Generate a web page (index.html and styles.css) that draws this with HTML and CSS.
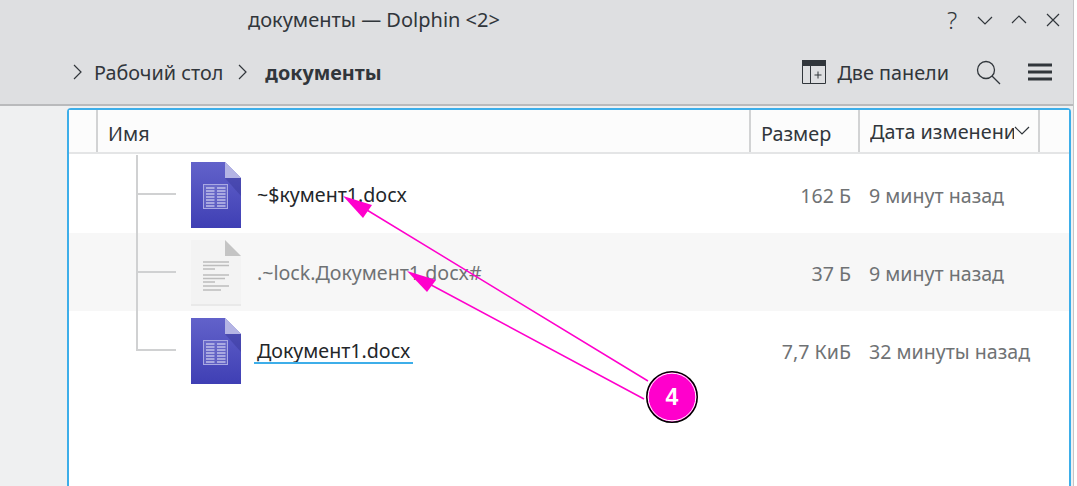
FILE: index.html
```html
<!DOCTYPE html>
<html lang="ru">
<head>
<meta charset="utf-8">
<title>документы — Dolphin &lt;2&gt;</title>
<link rel="stylesheet" href="styles.css">
</head>
<body>
<svg width="0" height="0" class="defs">
  <defs>
    <linearGradient id="blue" x1="0" y1="0" x2="0" y2="1">
      <stop offset="0" stop-color="#6262ca"/>
      <stop offset="1" stop-color="#3f3fb4"/>
    </linearGradient>
    <symbol id="docx" viewBox="0 0 50 66">
      <path d="M0 0H34L50 16V66H0Z" fill="url(#blue)"/>
      <path d="M34 16H50V34Z" fill="#2f2f8c" opacity=".35"/>
      <path d="M34 0L50 16H34Z" fill="#b4b4e4"/>
      <rect x="12.500" y="22.500" width="24" height="24" fill="#fff" fill-opacity=".12" stroke="#a9a9e2"/>
      <path d="M15 26h8.500M26 26h8.500M15 29h8.500M26 29h8.500M15 32h8.500M26 32h8.500M15 35h8.500M26 35h8.500M15 38h8.500M26 38h8.500M15 41h8.500M26 41h8.500M15 44h8.500M26 44h8.500" stroke="#eeeefb" stroke-width="1.100"/>
    </symbol>
  </defs>
</svg>
<div class="window">
  <header class="top">
    <div class="titlebar">
      <span class="title">документы — Dolphin &lt;2&gt;</span>
      <div class="winbtns">
        <span class="help">?</span>
        <svg class="wbtn" viewBox="0 0 16 16"><path d="M1 5l7 7 7-7" /></svg>
        <svg class="wbtn" viewBox="0 0 16 16"><path d="M1 11l7-7 7 7" /></svg>
        <svg class="wbtn" viewBox="0 0 16 16"><path d="M2 2l12 12M14 2L2 14" /></svg>
      </div>
    </div>
    <div class="toolbar">
      <svg class="crumb-sep" viewBox="0 0 10 16"><path d="M1 1l7 7-7 7"/></svg>
      <span class="crumb">Рабочий стол</span>
      <svg class="crumb-sep second" viewBox="0 0 10 16"><path d="M1 1l7 7-7 7"/></svg>
      <span class="crumb current">документы</span>
      <div class="tools">
        <svg class="split" viewBox="0 0 24 24"><path d="M0 0H24V6H0Z" fill="#31363b"/><path d="M.5 6V23.500H23.500V6M8.500 6V23.500M16 11.500V18.500M12.500 15H19.500" fill="none" stroke="#31363b"/></svg>
        <span class="tool-label">Две панели</span>
        <svg class="search" viewBox="0 0 25 25"><circle cx="10" cy="10" r="8.500"/><path d="M16 16l8 8"/></svg>
        <svg class="menu" viewBox="0 0 24 20"><path d="M0 3H24M0 10H24M0 17H24"/></svg>
      </div>
    </div>
  </header>
  <main class="content">
    <section class="panel">
      <div class="columns">
        <div class="col col-gutter"></div>
        <div class="col col-name">Имя</div>
        <div class="col col-size">Размер</div>
        <div class="col col-date"><span class="date-text">Дата изменени</span><svg class="sort" viewBox="0 0 16 10"><path d="M1 1l7 7 7-7"/></svg></div>
      </div>
      <div class="rows">
        <div class="row">
          <div class="tree first"></div>
          <svg class="icon"><use href="#docx"/></svg>
          <span class="name">~$кумент1.docx</span>
          <span class="size">162 Б</span>
          <span class="date">9 минут назад</span>
        </div>
        <div class="row hidden-file">
          <div class="tree"></div>
          <svg class="icon" viewBox="0 0 50 66">
            <path d="M0 0H34L50 16V66H0Z" fill="#f3f3f3"/>
            <path d="M0 64H50V66H0Z" fill="#e9e9e9"/>
            <path d="M34 0L50 16H34Z" fill="#c4c4c4"/>
            <path d="M12 22H38M12 25.500H38M12 29H24M12 35H38M12 38.500H34M12 42H24M12 46H38M12 50H30" stroke="#bdbdbd" stroke-width="1.300"/>
          </svg>
          <span class="name">.~lock.Документ1.docx#</span>
          <span class="size">37 Б</span>
          <span class="date">9 минут назад</span>
        </div>
        <div class="row">
          <div class="tree last"></div>
          <svg class="icon"><use href="#docx"/></svg>
          <span class="name selected">Документ1.docx</span>
          <span class="size">7,7 КиБ</span>
          <span class="date">32 минуты назад</span>
        </div>
      </div>
    </section>
  </main>
</div>
<svg class="callout" width="1077" height="486" viewBox="0 0 1077 486">
  <path d="M648 381L362 207M644 399L420 279" stroke="#ff00cc" stroke-width="1.500" fill="none"/>
  <path d="M343 196L372 205L363 218Z" fill="#ff00cc"/>
  <path d="M407 271L436 280L427 292Z" fill="#ff00cc"/>
  <circle cx="672" cy="397" r="25.200" fill="#ff00cc" stroke="#000" stroke-width="1.600"/>
  <circle cx="672" cy="397" r="23.800" fill="none" stroke="#fff"/>
  <text x="672" y="405" class="callout-num">4</text>
</svg>
</body>
</html>
```
FILE: styles.css
```css
* { box-sizing: border-box; }
html, body { margin: 0; padding: 0; height: 486px; overflow: hidden; background: #fff; }
body { font-family: "Noto Sans", sans-serif; color: #232629; font-size: 19.800px; }
.defs { position: absolute; }
.window { width: 1074px; height: 486px; display: flex; flex-direction: column; background: #eff0f1; border-right: 1px solid #c4c5c7; }
.top { height: 106px; flex: none; background: #dedfe1; border-bottom: 2px solid #b9babc; }
.titlebar { height: 40px; display: flex; align-items: center; }
.title { margin-left: 248px; font-size: 20px; line-height: 40px; color: #31363b; }
.winbtns { margin-left: auto; display: flex; align-items: center; margin-right: 12px; }
.help { font-size: 24px; font-weight: 300; line-height: 24px; width: 18px; text-align: center; margin-right: 16px; color: #31363b; }
.wbtn { width: 16px; height: 16px; margin-left: 18px; fill: none; stroke: #31363b; stroke-width: 1.200; }
.help + .wbtn { margin-left: 0; }
.toolbar { height: 64px; display: flex; align-items: center; }
.crumb-sep { width: 10px; height: 16px; margin-left: 73px; fill: none; stroke: #31363b; stroke-width: 1.200; flex: none; }
.crumb-sep.second { margin-left: 15px; }
.crumb { margin-left: 11px; color: #31363b; }
.crumb.current { margin-left: 17px; font-weight: 700; }
.tools { margin-left: auto; display: flex; align-items: center; margin-right: 21px; }
.split { width: 24px; height: 24px; }
.tool-label { margin-left: 11px; color: #31363b; }
.search { width: 25px; height: 25px; margin-left: 27px; fill: none; stroke: #31363b; stroke-width: 1.300; }
.menu { width: 24px; height: 20px; margin-left: 27px; stroke: #31363b; stroke-width: 3; fill: none; }
.content { flex: 1; display: flex; padding: 2px 2px 0 67px; min-height: 0; }
.panel { flex: 1; background: #fff; border: 2px solid #3daee9; border-bottom: 0; border-radius: 4px 4px 0 0; display: flex; flex-direction: column; }
.columns { height: 44px; flex: none; display: flex; background: #fcfcfc; border-bottom: 2px solid #e4e5e6; color: #31363b; }
.col { border-right: 2px solid #d2d3d4; line-height: 47px; white-space: nowrap; overflow: hidden; }
.col-gutter { width: 29px; flex: none; }
.col-name { width: 653px; flex: none; padding-left: 10px; }
.col-size { width: 109px; flex: none; padding-left: 10px; }
.col-date { width: 180px; flex: none; padding-left: 10px; display: flex; align-items: center; }
.date-text { width: 144px; overflow: hidden; flex: none; }
.sort { width: 16px; height: 10px; flex: none; fill: none; stroke: #31363b; stroke-width: 1.200; }
.rows { padding-top: 1px; font-size: 19.600px; }
.row { height: 78px; display: flex; align-items: center; position: relative; }
.hidden-file { background: #f7f7f7; color: #6f7274; }
.tree { width: 122px; height: 78px; flex: none; position: relative; }
.tree::before { content: ""; position: absolute; left: 67px; top: 0; bottom: 0; border-left: 2px solid #d0d1d2; }
.tree::after { content: ""; position: absolute; left: 67px; top: 38px; width: 40px; border-top: 2px solid #d0d1d2; }
.tree.last::before { bottom: 38px; }
.icon { width: 50px; height: 66px; flex: none; margin-top: 2px; }
.name { margin: 2px 0 0 16px; width: 440px; flex: none; line-height: 24px; white-space: nowrap; }
.selected { position: relative; }
.selected::after { content: ""; position: absolute; left: -3px; width: 159px; top: 23px; border-top: 2px solid #3daee9; }
.size { width: 154px; flex: none; margin-top: 2px; text-align: right; color: #6f7274; }
.date { margin: 2px 0 0 18px; color: #6f7274; white-space: nowrap; }
.callout { position: absolute; left: 0; top: 0; }
.callout-num { font-family: "Liberation Sans", sans-serif; font-weight: 700; font-size: 23px; fill: #fff; text-anchor: middle; }
```
